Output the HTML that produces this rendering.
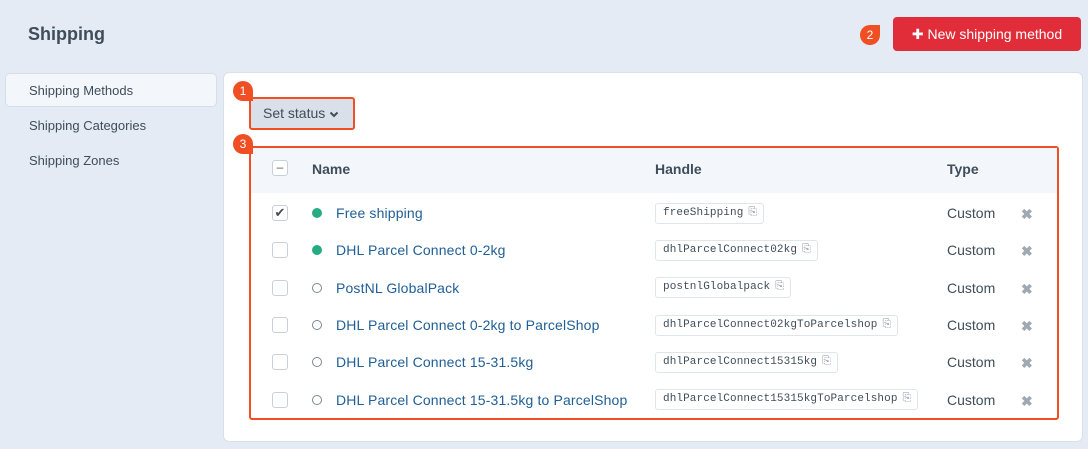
<!DOCTYPE html><html><head><style>
*{box-sizing:border-box;margin:0;padding:0}
body{width:1088px;height:449px;background:#e4ebf4;font-family:"Liberation Sans",sans-serif;position:relative;overflow:hidden;color:#3f4d5a}
.abs{position:absolute}
h1{position:absolute;left:28px;top:24px;font-size:18px;font-weight:bold;color:#3f4d5a}
.btn{position:absolute;left:893px;top:17px;width:188px;height:34px;background:#e12d39;border-radius:4px;color:#fff;font-size:14px;line-height:34px;text-align:center}
.side{position:absolute;left:5px;top:73px;width:212px;height:34px;background:#f3f7fc;border:1px solid #d8dee6;border-radius:5px}
.sl{position:absolute;left:29px;font-size:13px;color:#3f4d5a}
.card{position:absolute;left:224px;top:73px;width:858px;height:368px;background:#fff;border-radius:5px;box-shadow:0 0 0 1px #d9e0e8}
.mk{position:absolute;width:20px;height:20px;border-radius:50% 50% 0 50%;background:#f04e23;color:#fff;font-size:12px;line-height:20px;text-align:center}
.ss{position:absolute;left:249px;top:97px;width:106px;height:33px;background:#dae0e9;border:2px solid #f04e23;border-radius:3px;font-size:14px;line-height:29px;padding-left:12px;color:#3f4d5a}
.tb{position:absolute;left:249px;top:146px;width:810px;height:274px;border:2px solid #f04e23;border-radius:3px}
.hd{position:absolute;left:251px;top:148px;width:806px;height:45px;background:#f3f7fc}
.th{position:absolute;top:161px;font-size:14px;font-weight:bold;color:#3f4d5a}
.cb{position:absolute;left:272px;width:16px;height:16px;border:1px solid #c8d0da;border-radius:3px;background:#fff}
.dot{position:absolute;left:312px;width:10px;height:10px;border-radius:50%}
.nm{position:absolute;left:336px;font-size:14px;color:#1f5e96;letter-spacing:0.15px}
.hc{position:absolute;left:655px;height:21px;border:1px solid #e0e5eb;border-radius:3px;font-family:"Liberation Mono",monospace;font-size:11px;line-height:19px;padding:0 6px 0 7px;color:#3f4d5a;background:#fff;letter-spacing:0.1px}
.hc i{font-style:normal;color:#8a96a3;margin-left:5px;font-size:11px}
.ty{position:absolute;left:947px;font-size:14px;color:#3f4d5a}
.x{position:absolute;left:1021px;font-size:14px;color:#a0a8b2;font-weight:bold}
</style></head><body>
<h1>Shipping</h1>
<div class="mk" style="left:860px;top:25px;border-radius:50% 0 50% 50%">2</div>
<div class="btn">✚ New shipping method</div>
<div class="side"></div>
<div class="sl" style="top:83px">Shipping Methods</div>
<div class="sl" style="top:118px">Shipping Categories</div>
<div class="sl" style="top:153px">Shipping Zones</div>
<div class="card"></div>
<div class="ss">Set status <svg width="10" height="8" viewBox="0 0 10 8" style="vertical-align:middle"><path d="M1.5 2.5 L5 6 L8.5 2.5" stroke="#3f4d5a" stroke-width="2" fill="none"/></svg></div>
<div class="mk" style="left:233px;top:81px">1</div>
<div class="tb"></div>
<div class="hd"></div>
<div class="mk" style="left:233px;top:134px">3</div>
<div class="cb" style="top:160px;text-align:center;line-height:12px;font-size:12px;color:#555">–</div>
<div class="th" style="left:312px">Name</div>
<div class="th" style="left:655px">Handle</div>
<div class="th" style="left:947px">Type</div>

<div class="cb" style="top:205px;text-align:center;line-height:14px;font-size:13px;color:#3f4d5a">✔</div>
<div class="dot" style="top:208px;background:#27ab83"></div>
<div class="nm" style="top:205px">Free shipping</div>
<div class="hc" style="top:203px">freeShipping<i>⎘</i></div>
<div class="ty" style="top:205px">Custom</div><div class="x" style="top:206px">✖</div>

<div class="cb" style="top:242px"></div>
<div class="dot" style="top:245px;background:#27ab83"></div>
<div class="nm" style="top:242px">DHL Parcel Connect 0-2kg</div>
<div class="hc" style="top:240px">dhlParcelConnect02kg<i>⎘</i></div>
<div class="ty" style="top:242px">Custom</div><div class="x" style="top:243px">✖</div>

<div class="cb" style="top:280px"></div>
<div class="dot" style="top:283px;border:1px solid #7b8794"></div>
<div class="nm" style="top:280px">PostNL GlobalPack</div>
<div class="hc" style="top:277px">postnlGlobalpack<i>⎘</i></div>
<div class="ty" style="top:280px">Custom</div><div class="x" style="top:281px">✖</div>

<div class="cb" style="top:317px"></div>
<div class="dot" style="top:320px;border:1px solid #7b8794"></div>
<div class="nm" style="top:317px">DHL Parcel Connect 0-2kg to ParcelShop</div>
<div class="hc" style="top:315px">dhlParcelConnect02kgToParcelshop<i>⎘</i></div>
<div class="ty" style="top:317px">Custom</div><div class="x" style="top:318px">✖</div>

<div class="cb" style="top:354px"></div>
<div class="dot" style="top:357px;border:1px solid #7b8794"></div>
<div class="nm" style="top:354px">DHL Parcel Connect 15-31.5kg</div>
<div class="hc" style="top:352px">dhlParcelConnect15315kg<i>⎘</i></div>
<div class="ty" style="top:354px">Custom</div><div class="x" style="top:355px">✖</div>

<div class="cb" style="top:392px"></div>
<div class="dot" style="top:395px;border:1px solid #7b8794"></div>
<div class="nm" style="top:392px">DHL Parcel Connect 15-31.5kg to ParcelShop</div>
<div class="hc" style="top:389px">dhlParcelConnect15315kgToParcelshop<i>⎘</i></div>
<div class="ty" style="top:392px">Custom</div><div class="x" style="top:393px">✖</div>
</body></html>
